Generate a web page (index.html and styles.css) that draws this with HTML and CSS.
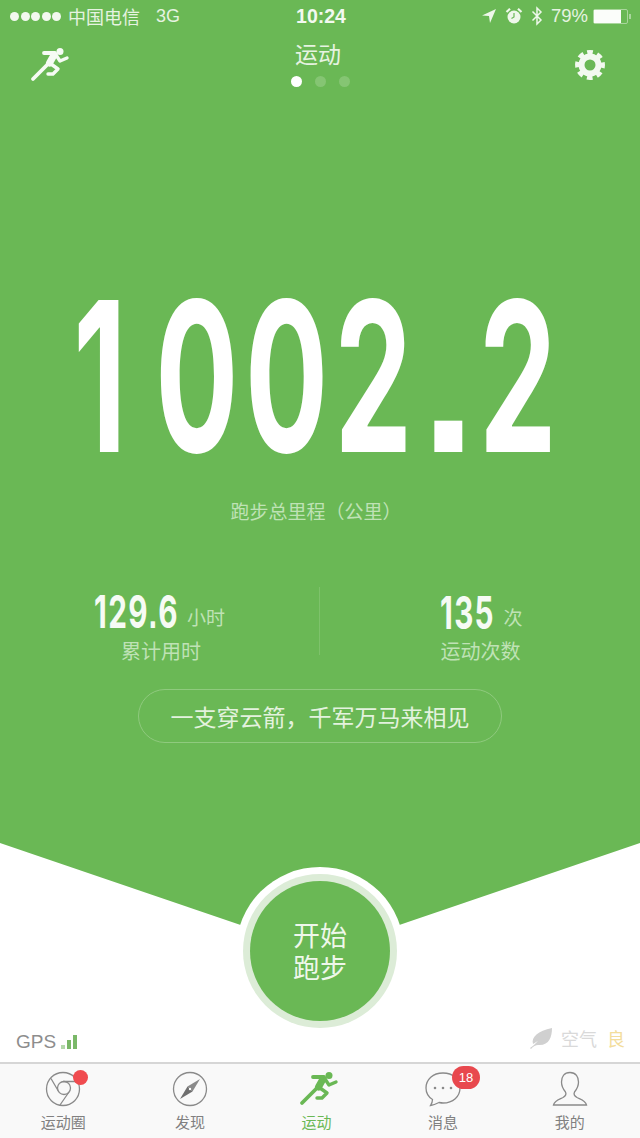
FILE: index.html
```html
<!DOCTYPE html>
<html>
<head>
<meta charset="utf-8">
<title>运动</title>
<link rel="stylesheet" href="styles.css">
</head>
<body>
<div class="app">
    <!-- 绿色主区域 -->
    <div class="hero">
        <div class="status">
            <div class="status-left">
                <span class="signal"><i></i><i></i><i></i><i></i><i></i></span>
                <span>中国电信</span>
                <span class="net">3G</span>
            </div>
            <div class="status-time">10:24</div>
            <div class="status-right">
                <svg width="16" height="16" viewBox="0 0 16 16"><path d="M15 1 L1 7.5 L8 8 L9 15 Z" fill="#eef7ea"/></svg>
                <svg width="18" height="18" viewBox="0 0 18 18"><circle cx="9" cy="10" r="6.5" fill="#eef7ea"/><path d="M9 6 V10 L6.5 11.5" fill="none" stroke="#6ab855" stroke-width="1.2"/><path d="M1.5 5 L5 1.8 M16.5 5 L13 1.8" stroke="#eef7ea" stroke-width="2.2"/></svg>
                <svg width="12" height="20" viewBox="0 0 12 20"><path d="M1.5 5.5 L10 14 L6 18 V2 L10 6 L1.5 14.5" fill="none" stroke="#eef7ea" stroke-width="1.5"/></svg>
                <span class="percent">79%</span>
                <span class="battery"><span class="battery-level"></span></span>
            </div>
        </div>

        <div class="nav">
            <svg class="nav-run" width="40" height="36" viewBox="0 0 40 36">
                <use href="#runner"/>
            </svg>
            <div class="nav-title">
                <div class="title">运动</div>
                <div class="dots"><i class="on"></i><i></i><i></i></div>
            </div>
            <svg class="nav-gear" width="32" height="32" viewBox="0 0 32 32">
                <circle cx="16" cy="16" r="8.5" fill="none" stroke="#f3f9f0" stroke-width="6"/>
                <circle cx="16" cy="16" r="12.5" fill="none" stroke="#f3f9f0" stroke-width="5" stroke-dasharray="5.4 4.42" transform="rotate(-102.4 16 16)"/>
            </svg>
        </div>

        <div class="total">
            <div class="total-num"><span class="one">1</span>002<span class="pt">.</span>2</div>
            <div class="total-label">跑步总里程（公里）</div>
        </div>

        <div class="stats">
            <div class="stat">
                <div class="stat-value"><b>129<span class="small-pt">.</span>6</b><span class="unit">小时</span></div>
                <div class="stat-label">累计用时</div>
            </div>
            <div class="stat stat-right">
                <div class="stat-value"><b>135</b><span class="unit">次</span></div>
                <div class="stat-label">运动次数</div>
            </div>
        </div>

        <div class="motto">一支穿云箭，千军万马来相见</div>
    </div>

    <!-- 底部白色区域 -->
    <div class="ground">
        <div class="gps">GPS
            <span class="gps-bars"><i></i><i></i><i></i></span>
        </div>
        <div class="air">
            <svg width="24" height="22" viewBox="0 0 24 22"><path d="M1 21 C4 19 6 17 9 14 C6 15.5 5 16.5 4 17 C2 10 9 4 23 1 C23 10 20 19 9 18 C7 18 4 19.5 2 22 Z" fill="#d0d0d0"/></svg>
            <span class="air-text">空气</span>
            <span class="air-level">良</span>
        </div>
    </div>

    <div class="tabs">
        <div class="tab">
            <span class="tab-icon">
                <svg width="36" height="36" viewBox="0 0 36 36" fill="none" stroke="#8a8a8a" stroke-width="1.3">
                    <circle cx="18" cy="18" r="16.5"/>
                    <circle cx="19" cy="17" r="6.5"/>
                    <path d="M18 10.5 H32 M13 19.5 L6 7.5 M24 21 L15 34"/>
                </svg>
                <i class="dot"></i>
            </span>
            <span class="tab-text">运动圈</span>
        </div>
        <div class="tab">
            <span class="tab-icon">
                <svg width="36" height="36" viewBox="0 0 36 36">
                    <circle cx="18" cy="18" r="16.5" fill="none" stroke="#8a8a8a" stroke-width="1.3"/>
                    <path d="M28 8 L20.5 20.5 L15.5 15.5 Z" fill="#8a8a8a"/>
                    <path d="M8 28 L15.5 15.5 L20.5 20.5 Z" fill="#6f6f6f"/>
                    <circle cx="18" cy="18" r="1.2" fill="#fff"/>
                </svg>
            </span>
            <span class="tab-text">发现</span>
        </div>
        <div class="tab tab-on">
            <span class="tab-icon">
                <svg width="40" height="36" viewBox="0 0 40 36" class="tab-run"><use href="#runner"/></svg>
            </span>
            <span class="tab-text">运动</span>
        </div>
        <div class="tab">
            <span class="tab-icon">
                <svg width="36" height="36" viewBox="0 0 36 36">
                    <path d="M18 2 C8 2 1 8.5 1 17 C1 22 3.5 26 7.5 28.5 C7.5 31 6.5 33 5.5 34.5 C9 34 12 32.5 14 31.5 C15.5 31.8 16.8 32 18 32 C28 32 35 25.5 35 17 C35 8.5 28 2 18 2 Z" fill="none" stroke="#8a8a8a" stroke-width="1.3"/>
                    <circle cx="10" cy="17" r="1.3" fill="#8a8a8a"/>
                    <circle cx="18" cy="17" r="1.3" fill="#8a8a8a"/>
                    <circle cx="26" cy="17" r="1.3" fill="#8a8a8a"/>
                </svg>
                <i class="badge">18</i>
            </span>
            <span class="tab-text">消息</span>
        </div>
        <div class="tab">
            <span class="tab-icon">
                <svg width="36" height="36" viewBox="0 0 36 36">
                    <path d="M18 1.5 C12 1.5 9.5 6 9.5 11 C9.5 15 11 18 13.5 21 C14.5 23 13.5 25 11 26.5 C7 28.5 2.5 29.5 1.5 34 H34.5 C33.5 29.5 29 28.5 25 26.5 C22.5 25 21.5 23 22.5 21 C25 18 26.5 15 26.5 11 C26.5 6 24 1.5 18 1.5 Z" fill="none" stroke="#8a8a8a" stroke-width="1.3"/>
                </svg>
            </span>
            <span class="tab-text">我的</span>
        </div>
    </div>

    <!-- 开始按钮，压在绿色和白色区域的交界处 -->
    <div class="start">
        <div class="start-ring">
            <div class="start-btn">开始<br>跑步</div>
        </div>
    </div>
</div>

<svg width="0" height="0" class="defs">
    <symbol id="runner" viewBox="0 0 40 36">
        <circle cx="30" cy="5.5" r="3.5" fill="currentColor"/>
        <path d="M14 7 H25 L19 17 L3 33" fill="none" stroke="currentColor" stroke-width="3.8" stroke-linecap="round" stroke-linejoin="round"/>
        <path d="M24 9 L19.5 17" fill="none" stroke="currentColor" stroke-width="7" stroke-linecap="round"/>
        <path d="M26 9 L30 15 L37 12 M21 18 L28 23 L23 28 H18" fill="none" stroke="currentColor" stroke-width="3.4" stroke-linecap="round" stroke-linejoin="round"/>
    </symbol>
</svg>
</body>
</html>
```

FILE: styles.css
```css
*{
    padding:0;
    margin:0;
    box-sizing:border-box;
}

body{
    width:640px;
    height:1138px;
    overflow:hidden;
    background:#fff;
    font-family:"Noto Sans CJK SC","Liberation Sans",sans-serif;
}

i{
    font-style:normal;
}

.defs{
    display:block;
}

.app{
    width:640px;
    height:1138px;
    position:relative;
    display:flex;
    flex-direction:column;
}

/*绿色主区域，下边是一个V形*/
.hero{
    height:952px;
    background:#6ab855;
    color:#fff;
    clip-path:polygon(0 0,640px 0,640px 843px,320px 952px,0 843px);
    display:flex;
    flex-direction:column;
}

/*状态栏*/
.status{
    height:32px;
    padding:0 8px 0 10px;
    display:grid;
    grid-template-columns:1fr auto 1fr;
    align-items:center;
    font-size:18px;
    color:#e6f3e1;
}

.status-left{
    display:flex;
    align-items:center;
    gap:5px;
}

.signal{
    display:flex;
    gap:1.5px;
    margin-right:2px;
}

.signal i{
    width:9px;
    height:9px;
    border-radius:50%;
    background:#f3f9f0;
}

.net{
    margin-left:11px;
    font-family:"Liberation Sans",sans-serif;
}

.status-time{
    font:bold 19.5px "Liberation Sans",sans-serif;
    color:#f3f9f0;
}

.status-right{
    display:flex;
    align-items:center;
    justify-content:flex-end;
    gap:8px;
}

.percent{
    font:18.5px "Liberation Sans",sans-serif;
    margin-right:-3px;
}

/*电池，右边的小凸起用伪元素画*/
.battery{
    width:35px;
    height:15px;
    border:1px solid #a9d69c;
    border-radius:2px;
    display:block;
    position:relative;
    margin-right:4px;
}

.battery::after{
    content:"";
    position:absolute;
    right:-4px;
    top:4px;
    width:2px;
    height:5px;
    background:#a9d69c;
}

.battery-level{
    display:block;
    width:27px;
    height:13px;
    background:#fbfdfa;
}

/*导航*/
.nav{
    height:64px;
    padding:0 34px 0 30px;
    display:flex;
    justify-content:space-between;
    align-items:flex-start;
}

.nav-run{
    color:#f6fbf4;
    margin-top:14px;
}

.nav-gear{
    margin-top:17px;
}

.nav-title{
    text-align:center;
    margin-left:-8px;
}

.title{
    font-size:23px;
    line-height:46px;
    color:#e6f3e1;
    height:46px;
    margin-top:-2px;
}

.dots{
    display:flex;
    gap:13px;
    justify-content:center;
    margin-left:4px;
}

.dots i{
    width:11px;
    height:11px;
    border-radius:50%;
    background:#85c573;
}

.dots i.on{
    background:#fff;
}

/*总里程，字体要窄一些，用scaleX压扁*/
.total{
    margin-top:182px;
    display:flex;
    flex-direction:column;
    align-items:center;
}

.total-num{
    height:196px;
    font:bold 209px/196px Inter,sans-serif;
    letter-spacing:11px;
    color:#fff;
    white-space:nowrap;
    transform:scaleX(0.59);
    margin-right:3px;
}

.total-num .one{
    margin-right:38px;
}

/*小数点是方的*/
.total-num .pt{
    display:inline-block;
    font-family:"Liberation Sans",sans-serif;
    letter-spacing:0;
    margin:0 23px 0 21px;
    transform:scaleX(1.6);
}

.total-label{
    margin:22px 8px 0 0;
    font-size:19px;
    line-height:30px;
    color:#bfe2b5;
}

/*累计数据*/
.stats{
    margin-top:61px;
    height:86px;
    display:flex;
    justify-content:center;
    padding-top:8px;
}

.stats::before{
    content:"";
    width:1px;
    background:#7ec26b;
    order:1;
    height:68px;
    margin-top:-8px;
}

.stat{
    width:320px;
    padding-left:94px;
    order:0;
}

.stat-right{
    order:2;
    padding-left:120px;
}

.stat-value{
    display:flex;
    align-items:flex-end;
    height:36px;
}

.stat-value b{
    font:bold 45px/36px Inter,sans-serif;
    letter-spacing:2px;
    color:#f6fbf4;
    display:block;
    width:82px;
    white-space:nowrap;
    transform:scaleX(0.66);
    transform-origin:left;
}

.stat-value .small-pt{
    font-family:"Liberation Sans",sans-serif;
}

.stat-value .unit{
    margin-left:11px;
    font-size:19px;
    line-height:28px;
    color:#bfe2b5;
}

.stat-right .stat-value b{
    width:52px;
}

.stat-label{
    margin-top:6px;
    font-size:20px;
    line-height:28px;
    color:#bfe2b5;
    padding-left:27px;
}

.stat-right .stat-label{
    padding-left:0;
}

/*口号*/
.motto{
    width:364px;
    height:54px;
    margin:16px auto 0;
    border:1px solid #8fca7e;
    border-radius:27px;
    text-align:center;
    font-size:23px;
    line-height:52px;
    color:#e3f2de;
}

/*底部白色区域*/
.ground{
    height:110px;
    padding:0 16px 9px;
    display:flex;
    justify-content:space-between;
    align-items:flex-end;
}

.gps{
    font:19px/22px "Liberation Sans",sans-serif;
    color:#8d8d8d;
    display:flex;
    align-items:center;
    gap:5px;
}

.gps-bars{
    display:flex;
    align-items:flex-end;
    gap:2px;
    height:14px;
}

.gps-bars i{
    width:4px;
    background:#7ab868;
    height:14px;
}

.gps-bars i:nth-child(1){
    height:4px;
    background:#b4d8aa;
}

.gps-bars i:nth-child(2){
    height:9px;
}

.air{
    display:flex;
    align-items:center;
    gap:8px;
    font-size:18px;
    margin-right:-1px;
    margin-bottom:2px;
}

.air-text{
    color:#d9d9d9;
}

.air-level{
    color:#f3dd9c;
    margin-left:2px;
}

/*底部标签栏*/
.tabs{
    height:76px;
    border-top:2px solid #d6d6d6;
    background:#f9f9f9;
    display:flex;
    padding-right:7px;
}

.tab{
    flex:1;
    display:flex;
    flex-direction:column;
    align-items:center;
    padding-top:7px;
    font-size:15px;
    color:#808080;
}

.tab-icon{
    position:relative;
    height:36px;
    display:block;
}

.tab-text{
    margin-top:4px;
    line-height:22px;
}

.tab-on{
    color:#6ab855;
}

.tab-run{
    margin:-1px 0 0 6px;
}

.tab-icon .dot{
    position:absolute;
    right:-7px;
    top:-1px;
    width:15px;
    height:15px;
    border-radius:50%;
    background:#f04b4f;
}

.tab-icon .badge{
    position:absolute;
    right:-19px;
    top:-5px;
    width:28px;
    height:23px;
    border-radius:14px;
    background:#e8484e;
    color:#fff;
    font:13px/23px "Liberation Sans",sans-serif;
    text-align:center;
}

/*开始按钮*/
.start{
    position:absolute;
    left:236px;
    top:867px;
    width:168px;
    height:168px;
    border-radius:50%;
    background:#fff;
    display:flex;
    align-items:center;
    justify-content:center;
}

.start-ring{
    width:154px;
    height:154px;
    border-radius:50%;
    background:#dcecd7;
    display:flex;
    align-items:center;
    justify-content:center;
}

.start-btn{
    width:140px;
    height:140px;
    border-radius:50%;
    background:#6ab855;
    color:#eef7ea;
    font-size:27px;
    line-height:32px;
    text-align:center;
    padding-top:38px;
}
```
